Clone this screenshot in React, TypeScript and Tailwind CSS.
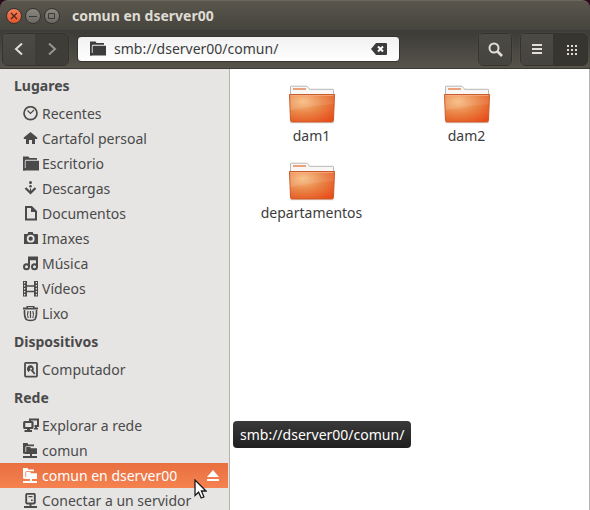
import type { ReactNode } from 'react'

const icons: Record<string, ReactNode> = {
  recent: (
    <>
      <circle cx="7.5" cy="7.2" r="6.5" fill="none" stroke="currentColor" strokeWidth="1.7" />
      <path d="M4.5 4.5 7.5 7.5 11 4" fill="none" stroke="currentColor" strokeWidth="1.2" />
    </>
  ),
  home: <path d="M7.5 1 .8 6.5V8H3v5h3V9h3v4h3V8h2.2V6.5Z" />,
  folder: (
    <>
      <path d="M0 .5h5.5l1 1.5H14v1.8H2.6L1.8 5v9.5H0Z" />
      <path d="M2.6 4.7H16v9.8H0V12h2.6Z" />
    </>
  ),
  download: (
    <>
      <circle cx="7.5" cy="1.5" r="1.5" />
      <circle cx="7.5" cy="5.2" r="1.3" />
      <path d="M2.5 7 7.5 12l5-5" fill="none" stroke="currentColor" strokeWidth="2.2" />
      <path d="M6.9 7.5h1.2V11H6.9Z" />
    </>
  ),
  document: (
    <>
      <path d="M3 1h5.5L13 5.5v8H3Z" fill="none" stroke="currentColor" strokeWidth="2" />
      <path d="M8 1l5 5H8Z" />
    </>
  ),
  camera: (
    <>
      <path
        fillRule="evenodd"
        d="M1 3h3.5l.8-2h4.4l.8 2H14a1 1 0 0 1 1 1v9H1Zm6.7.8a3.9 3.9 0 1 0 0 7.8 3.9 3.9 0 0 0 0-7.8Z"
      />
      <circle cx="7.7" cy="7.7" r="2.1" />
    </>
  ),
  music: (
    <>
      <path d="M5 .5h10V11h-2V4.3H7V11H5Z" />
      <circle cx="3.5" cy="10.7" r="2.5" fill="none" stroke="currentColor" strokeWidth="2" />
      <circle cx="11.5" cy="10.7" r="2.5" fill="none" stroke="currentColor" strokeWidth="2" />
    </>
  ),
  video: (
    <>
      <path d="M4 5h8M4 10.5h8" stroke="currentColor" strokeWidth="1.3" />
      <path
        fillRule="evenodd"
        d="M0 0h4v15.5H0ZM1 1v1.5h1.2V1Zm0 3v1.5h1.2V4Zm0 3v1.5h1.2V7Zm0 3v1.5h1.2V10Zm0 3v1.5h1.2V13ZM11 0h4v15.5h-4Zm1.8 1v1.5H14V1Zm0 3v1.5H14V4Zm0 3v1.5H14V7Zm0 3v1.5H14V10Zm0 3v1.5H14V13Z"
      />
    </>
  ),
  trash: (
    <>
      <path fillRule="evenodd" d="M0 1.5h3.5V0h8v1.5H15v2H0ZM5 1v.8h5V1Z" />
      <path
        d="M1.5 4q-.4 6 1.5 9.3 1 1.2 4.5 1.2t4.5-1.2Q13.9 10 13.5 4"
        fill="none"
        stroke="currentColor"
        strokeWidth="1.6"
      />
      <path
        d="M5.2 5q-1.4 3.5 0 7M9.8 5q1.4 3.5 0 7M7.5 5v7"
        fill="none"
        stroke="currentColor"
        strokeWidth="1.2"
      />
    </>
  ),
  disk: (
    <>
      <rect x="2" y="0.9" width="12" height="13.7" rx="0.8" fill="none" stroke="currentColor" strokeWidth="1.8" />
      <path d="M7.8 3a4 4 0 0 0-2.3 7.2L7.3 8l3.8 4.5 1.3-1-2-2.8A4 4 0 0 0 7.8 3Z" />
      <circle cx="8" cy="6.8" r="1" fill="#e6e5e4" />
    </>
  ),
  network: (
    <>
      <path d="M7 3V1.5h8V8h-3.5" fill="none" stroke="currentColor" strokeWidth="2" />
      <rect x="1.2" y="4" width="8.3" height="6" rx="0.5" fill="none" stroke="currentColor" strokeWidth="2.2" />
      <path d="M4 10.5h3V12h2v2H1.5v-2H4ZM12 8.5h2V10h1v1.5h-4V10h1Z" />
    </>
  ),
  share: (
    <>
      <path d="M0 0h4.5l.8 1.5H11v1.7H3.2L2.4 4v6.5H0Z" />
      <path d="M3.2 4h4L8 5.2h6V11H1.5V9h1.7Z" />
      <path d="M7 11h2v2h5v2H0v-2h7Z" />
    </>
  ),
  server: (
    <>
      <rect x="3.2" y="0.9" width="8.6" height="9.6" rx="1" fill="none" stroke="currentColor" strokeWidth="1.9" />
      <path d="M5.5 3h4v1.3h-4ZM8 6.5h1.7V8H8ZM6.5 11h2v2H14v2H1v-2h5.5Z" />
    </>
  ),
}

function Icon({ name }: { name: string }) {
  return (
    <svg viewBox="0 0 16 16" className="size-4 shrink-0" fill="currentColor" aria-hidden="true">
      {icons[name]}
    </svg>
  )
}

const sections = [
  {
    title: 'Lugares',
    items: [
      { icon: 'recent', label: 'Recentes' },
      { icon: 'home', label: 'Cartafol persoal' },
      { icon: 'folder', label: 'Escritorio' },
      { icon: 'download', label: 'Descargas' },
      { icon: 'document', label: 'Documentos' },
      { icon: 'camera', label: 'Imaxes' },
      { icon: 'music', label: 'Música' },
      { icon: 'video', label: 'Vídeos' },
      { icon: 'trash', label: 'Lixo' },
    ],
  },
  { title: 'Dispositivos', items: [{ icon: 'disk', label: 'Computador' }] },
  {
    title: 'Rede',
    items: [
      { icon: 'network', label: 'Explorar a rede' },
      { icon: 'share', label: 'comun' },
      { icon: 'share', label: 'comun en dserver00', active: true },
      { icon: 'server', label: 'Conectar a un servidor' },
    ],
  },
] as { title: string; items: { icon: string; label: string; active?: boolean }[] }[]

const folders = ['dam1', 'dam2', 'departamentos']

function TitleBar() {
  const base = 'flex size-4 items-center justify-center rounded-full border border-[#35342f]'
  return (
    <header className="flex h-[30px] shrink-0 items-center rounded-t-lg border-t border-[#6a675f] bg-linear-to-b from-[#5a564d] to-[#45443e] pl-[6px]">
      <div className="flex gap-[3px]">
        <button aria-label="Pechar" className={`${base} bg-linear-to-b from-[#f4805a] to-[#e2542a]`}>
          <svg viewBox="0 0 8 8" className="size-2" stroke="#50261a" strokeWidth="1.3">
            <path d="M1 1l6 6M7 1l-6 6" />
          </svg>
        </button>
        <button aria-label="Minimizar" className={`${base} bg-linear-to-b from-[#8b8880] to-[#6b6962]`}>
          <svg viewBox="0 0 8 8" className="size-2" stroke="#3b3a35">
            <path d="M0 4.5h8" />
          </svg>
        </button>
        <button aria-label="Maximizar" className={`${base} bg-linear-to-b from-[#8b8880] to-[#6b6962]`}>
          <svg viewBox="0 0 8 8" className="size-2" fill="none" stroke="#3b3a35">
            <path d="M.5 1.5h6v5h-6z" />
          </svg>
        </button>
      </div>
      <h1 className="ml-3 text-[14px] font-bold text-[#dfdbd2]">comun en dserver00</h1>
    </header>
  )
}

function Toolbar() {
  const group = 'flex h-[33px] shrink-0 overflow-hidden rounded-[5px] border border-[#34332e] shadow-[0_0_1px_#77746b]'
  const raised = 'flex w-8 items-center justify-center bg-linear-to-b from-[#4c4a44] to-[#45443e] text-[#e3dfd7]'
  return (
    <div className="flex h-[39px] shrink-0 items-center border-b border-[#3b3a35] bg-linear-to-b from-[#3c3b37] to-[#56534a] pr-[2px] pl-[2px]">
      <div className={group}>
        <button aria-label="Atrás" className={raised}>
          <svg viewBox="0 0 12 12" className="size-3" fill="none" stroke="currentColor" strokeWidth="2">
            <path d="M9 .5 3 6l6 5.5" />
          </svg>
        </button>
        <button aria-label="Adiante" className="flex w-[33px] items-center justify-center bg-[#3e3d38] text-[#99968e]">
          <svg viewBox="0 0 12 12" className="size-3" fill="none" stroke="currentColor" strokeWidth="2">
            <path d="M3 .5 9 6l-6 5.5" />
          </svg>
        </button>
      </div>
      <div className="mr-[78px] ml-2 flex h-[26px] min-w-0 flex-1 items-center rounded-[4px] border border-[#35342f] bg-linear-to-b from-[#f1f1f1] to-white pr-3 pl-3 text-[#3c3c3c]">
        <Icon name="folder" />
        <input
          aria-label="Localización"
          defaultValue="smb://dserver00/comun/"
          className="ml-2 min-w-0 flex-1 bg-transparent text-[14px] outline-none"
        />
        <button aria-label="Limpar">
          <svg viewBox="0 0 16 12" className="h-3 w-4">
            <path d="M0 6 5 0h10q1 0 1 1v10q0 1-1 1H5Z" fill="#3c3c3c" />
            <path d="M7 3.5l5 5M12 3.5l-5 5" stroke="#fff" strokeWidth="2" />
          </svg>
        </button>
      </div>
      <div className={group}>
        <button aria-label="Buscar" className={raised}>
          <svg viewBox="0 0 15 15" className="size-[15px]" fill="none" stroke="currentColor">
            <circle cx="6" cy="6" r="4.5" strokeWidth="2" />
            <path d="M9 9l5 5" strokeWidth="2.6" />
          </svg>
        </button>
      </div>
      <div className={`${group} ml-2`}>
        <button aria-label="Vista de lista" className={raised}>
          <svg viewBox="0 0 10 10" className="size-[10px]" fill="currentColor">
            <path d="M0 0h10v2H0zM0 4h10v2H0zM0 8h10v2H0z" />
          </svg>
        </button>
        <button
          aria-label="Vista de iconas"
          aria-pressed="true"
          className="flex w-[34px] items-center justify-center bg-[#36352f] pt-px pl-1 text-[#dfdbd2]"
        >
          <svg viewBox="0 0 10 10" className="size-[10px]" fill="currentColor">
            <path d="M0 0h2v2H0zM4 0h2v2H4zM8 0h2v2H8zM0 4h2v2H0zM4 4h2v2H4zM8 4h2v2H8zM0 8h2v2H0zM4 8h2v2H4zM8 8h2v2H8z" />
          </svg>
        </button>
      </div>
    </div>
  )
}

function Sidebar() {
  return (
    <nav className="w-[230px] shrink-0 overflow-hidden border-r border-[#b5b3b0] bg-[#e6e5e4] pt-px text-[#4a4a4a]">
      {sections.map((section) => (
        <section key={section.title}>
          <h2 className="pt-1 pb-[3px] pl-[14px] text-[14px] leading-6 font-bold">{section.title}</h2>
          <ul>
            {section.items.map((item) => (
              <li
                key={item.label}
                className={`mr-px flex h-[25px] items-center pr-[9px] pl-[23px] ${
                  item.active ? 'bg-linear-to-b from-[#e96f40] to-[#f58250] text-white' : ''
                }`}
              >
                <a href="#" className="flex min-w-0 flex-1 items-center gap-[3px] whitespace-nowrap">
                  <Icon name={item.icon} />
                  {item.label}
                </a>
                {item.active && (
                  <button aria-label="Expulsar">
                    <svg viewBox="0 0 12 11" className="h-[11px] w-3" fill="currentColor">
                      <path d="M6 0l6 7H0zM0 9h12v2H0z" />
                    </svg>
                  </button>
                )}
              </li>
            ))}
          </ul>
        </section>
      ))}
    </nav>
  )
}

function FolderIcon() {
  return (
    <svg viewBox="0 0 48 40" className="h-10 w-12" aria-hidden="true">
      <defs>
        <radialGradient id="front" cx="0.3" cy="0.25" r="0.9">
          <stop offset="0" stopColor="#f7bd82" />
          <stop offset="0.5" stopColor="#e98345" />
          <stop offset="1" stopColor="#e84e1b" />
        </radialGradient>
        <linearGradient id="gloss" x1="0" y1="0" x2="0" y2="1">
          <stop offset="0" stopColor="#fff" stopOpacity="0.05" />
          <stop offset="1" stopColor="#fff" stopOpacity="0.12" />
        </linearGradient>
      </defs>
      <path d="M2.5 11V3q0-.8.8-.8H18q1.5 0 2.5 1.5l1 1.6h23.2q.8 0 .8.8V11" fill="#f8f7f6" stroke="#b9b7b4" />
      <path d="M5 4h13v2H5z" fill="#e9a37c" />
      <path d="M2 38.8h44" stroke="#000" strokeOpacity="0.15" />
      <path d="M1.5 10.5h45l-1 26q-.1 1.5-1.5 1.5H4q-1.4 0-1.5-1.5Z" fill="url(#front)" stroke="#c95a29" />
      <path d="M2 11h44l-.3 9Q24 21.5 2.4 26Z" fill="url(#gloss)" />
      <path d="M2.5 11.5h43" stroke="#f9b28a" strokeOpacity="0.7" />
    </svg>
  )
}

export default function App() {
  return (
    <div className="relative flex h-screen flex-col overflow-hidden bg-[#2c0a1c] font-['Noto_Sans',sans-serif] text-[14px] leading-5">
      <TitleBar />
      <Toolbar />
      <div className="flex min-h-0 flex-1 bg-white">
        <Sidebar />
        <main className="relative min-w-0 flex-1 border-r border-[#b5b3b0]">
          <div className="flex flex-wrap pt-[15px] pl-1">
            {folders.map((name) => (
              <button key={name} className="flex h-[77px] w-[155px] flex-col items-center text-[#3c3c3c]">
                <FolderIcon />
                <span className="mt-[2px]">{name}</span>
              </button>
            ))}
          </div>
          <div
            role="tooltip"
            className="absolute top-[352px] left-[3px] rounded-[4px] bg-linear-to-b from-[#3a3a3a] to-[#1f1f1f] px-[7px] py-1 leading-[19px] whitespace-nowrap text-white"
          >
            smb://dserver00/comun/
          </div>
        </main>
      </div>
      <svg viewBox="0 0 13 20" className="pointer-events-none absolute top-[479px] left-[194px] h-5 w-[13px]">
        <path
          d="M1 1v15.5l3.6-3.3 2.6 5.8 2.7-1.2L7.4 12H12Z"
          fill="#fff"
          stroke="#1a1a1a"
          strokeWidth="1.3"
        />
      </svg>
    </div>
  )
}
